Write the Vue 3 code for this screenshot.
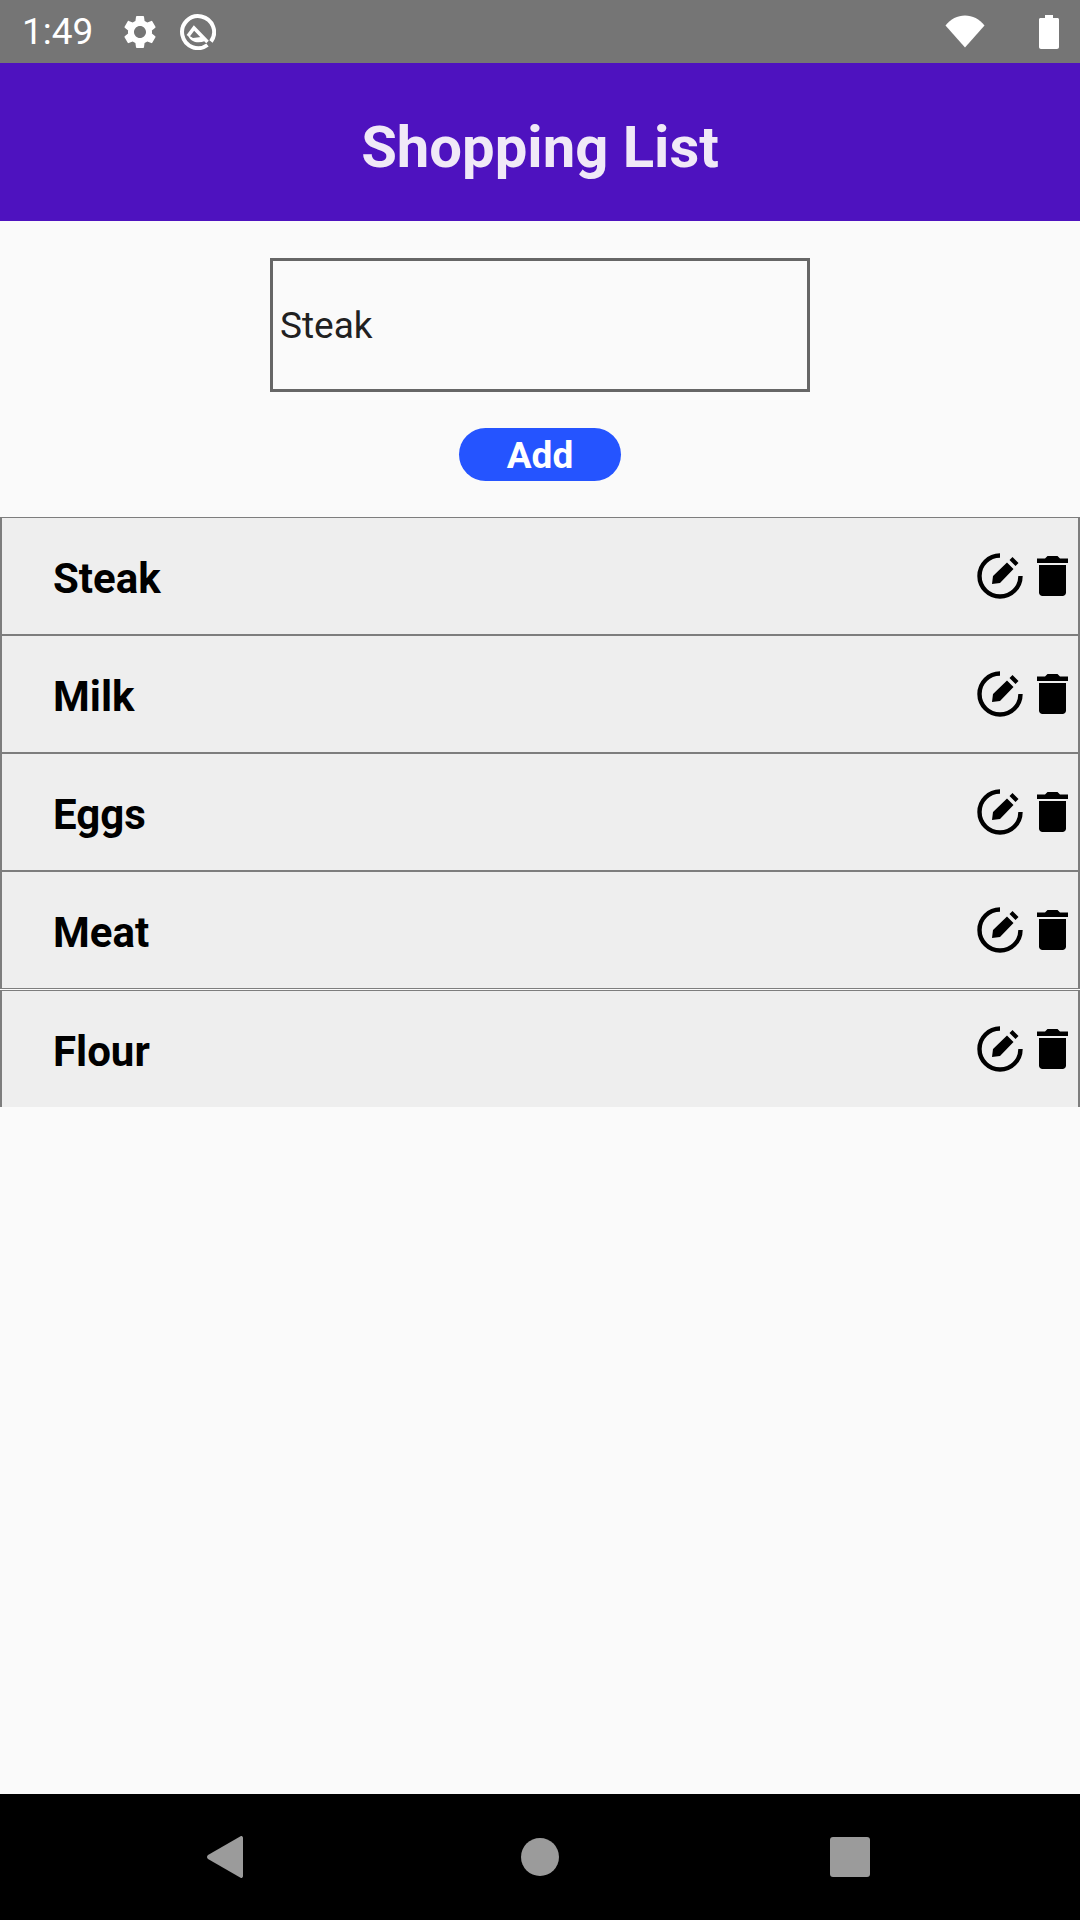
<template>
  <div class="screen">
    <div class="status-bar">
      <span class="time">1:49</span>
      <svg class="gear" viewBox="0 0 24 24"><path fill="#fff" d="M19.14 12.94c.04-.3.06-.61.06-.94 0-.32-.02-.64-.07-.94l2.03-1.58a.49.49 0 0 0 .12-.61l-1.92-3.32a.488.488 0 0 0-.59-.22l-2.39.96c-.5-.38-1.03-.7-1.62-.94l-.36-2.54a.484.484 0 0 0-.48-.41h-3.84c-.24 0-.43.17-.47.41l-.36 2.54c-.59.24-1.13.57-1.62.94l-2.39-.96c-.22-.08-.47 0-.59.22L2.74 8.87c-.12.21-.08.47.12.61l2.03 1.58c-.05.3-.09.63-.09.94s.02.64.07.94l-2.03 1.58a.49.49 0 0 0-.12.61l1.92 3.32c.12.22.37.29.59.22l2.39-.96c.5.38 1.03.7 1.62.94l.36 2.54c.05.24.24.41.48.41h3.84c.24 0 .44-.17.47-.41l.36-2.54c.59-.24 1.13-.56 1.62-.94l2.39.96c.22.08.47 0 .59-.22l1.92-3.32c.12-.22.07-.47-.12-.61l-2.01-1.58zM12 15.6c-1.98 0-3.6-1.62-3.6-3.6s1.62-3.6 3.6-3.6 3.6 1.62 3.6 3.6-1.62 3.6-3.6 3.6z"/></svg>
      <svg class="q-icon" viewBox="0 0 36 36">
        <path fill="none" stroke="#fff" stroke-width="4" d="M27.500 31A16 16 0 1 1 31 27.500"/>
        <path fill="none" stroke="#fff" stroke-width="3.600" d="M8 22 14 14 27.500 28"/>
        <path fill="#fff" d="M8 21 13 24 21 23 25 27C18 30 10 28 8 21z"/>
      </svg>
      <span class="spacer"></span>
      <svg class="wifi" viewBox="0 0 40 33"><path fill="#fff" d="M0.5 10.5C5.5 4 12.5 .5 20 .5s14.5 3.500 19.500 10L20 32.500z"/></svg>
      <svg class="battery" viewBox="0 0 20 34"><path fill="#fff" d="M6 0h8v3h4.500c.8 0 1.500.7 1.500 1.500V32c0 1.100-.9 2-2 2H2c-1.100 0-2-.9-2-2V4.500C0 3.700.7 3 1.500 3H6z"/></svg>
    </div>

    <header class="app-header">Shopping List</header>

    <main class="content">
      <div class="form">
        <input class="item-input" type="text" value="Steak" />
        <button class="add-btn">Add</button>
      </div>

      <div class="list">
        <div v-for="item in items" :key="item" class="row">
          <span class="row-name">{{ item }}</span>
          <svg class="edit-icon" viewBox="0 0 46 46">
            <path fill="none" stroke="#000" stroke-width="4.400" d="M23 2.500A20.500 20.500 0 1 0 43.500 23"/>
            <path fill="#000" d="M15 31 16 23 30 9.500 36.500 16 23 30zM32.500 7 35.500 4 41.500 10 38.500 13z"/>
          </svg>
          <svg class="trash-icon" viewBox="0 0 31 40">
            <path fill="#000" d="M10.500 0h10l2.500 2.500h8v4.500H0V2.500h8zM2 9h27v27.500c0 2-1.600 3.500-3.500 3.500h-20C3.600 40 2 38.500 2 36.500z"/>
          </svg>
        </div>
      </div>
    </main>

    <nav class="nav-bar">
      <svg class="nav-back" viewBox="0 0 36 42"><path fill="#9b9b9b" d="M34 0c1 0 2 .6 2 2v38c0 1.400-1 2-2 2L1 23c-1.300-1-1.300-3 0-4z"/></svg>
      <span class="nav-home"></span>
      <span class="nav-recent"></span>
    </nav>
  </div>
</template>

<script setup>
const items = ['Steak', 'Milk', 'Eggs', 'Meat', 'Flour']
</script>

<style>
html, body {
  margin: 0;
  padding: 0;
}
</style>

<style scoped>
.screen {
  width: 1080px;
  height: 1920px;
  display: flex;
  flex-direction: column;
  background: #fafafa;
  font-family: Roboto, "Liberation Sans", sans-serif;
  overflow: hidden;
}

.status-bar {
  height: 63px;
  flex: none;
  display: flex;
  align-items: center;
  padding: 0 21px 0 22px;
  box-sizing: border-box;
  background: #757575;
  color: #fff;
}

.time {
  font-size: 37px;
  width: 98px;
}

.gear {
  width: 40px;
  height: 40px;
}

.q-icon {
  width: 36px;
  height: 36px;
  margin-left: 20px;
}

.spacer {
  flex: 1;
}

.wifi {
  width: 40px;
  height: 33px;
}

.battery {
  width: 20px;
  height: 34px;
  margin-left: 54px;
}

.app-header {
  height: 158px;
  flex: none;
  display: flex;
  align-items: center;
  justify-content: center;
  background: #4e12bf;
  color: #f0e9f7;
  font-size: 58px;
  font-weight: 700;
  padding-top: 10px;
  box-sizing: border-box;
}

.content {
  flex: 1;
}

.form {
  display: flex;
  flex-direction: column;
  align-items: center;
  padding-top: 37px;
}

.item-input {
  width: 540px;
  height: 134px;
  box-sizing: border-box;
  border: 3px solid #666;
  border-radius: 0;
  padding: 0 7px;
  background: transparent;
  font-family: inherit;
  font-size: 37px;
  color: #212121;
  outline: none;
}

.add-btn {
  width: 162px;
  height: 53px;
  margin-top: 36px;
  padding: 1px 0 0;
  border: none;
  border-radius: 27px;
  background: #2554ff;
  color: #fff;
  font-family: inherit;
  font-size: 37px;
  font-weight: 700;
}

.list {
  margin-top: 36px;
  height: 590px;
  overflow: hidden;
}

.row {
  height: 118px;
  box-sizing: border-box;
  display: flex;
  align-items: center;
  border: 1px solid #7d7d7d;
  border-left-width: 2px;
  border-right-width: 2px;
  background: #eee;
  padding-left: 51px;
}

.row:nth-child(5) {
  margin-top: 1px;
}

.row-name {
  flex: 1;
  font-size: 42px;
  font-weight: 700;
  color: #000;
  padding-top: 5px;
}

.edit-icon {
  width: 46px;
  height: 46px;
  margin-bottom: 1px;
}

.trash-icon {
  width: 31px;
  height: 40px;
  margin-left: 14px;
  margin-right: 10px;
}

.nav-bar {
  height: 126px;
  flex: none;
  background: #000;
  position: relative;
}

.nav-back {
  position: absolute;
  left: 207px;
  top: 42px;
  width: 36px;
  height: 42px;
}

.nav-home {
  position: absolute;
  left: 521px;
  top: 44px;
  width: 38px;
  height: 38px;
  border-radius: 50%;
  background: #9b9b9b;
}

.nav-recent {
  position: absolute;
  left: 830px;
  top: 43px;
  width: 40px;
  height: 40px;
  border-radius: 3px;
  background: #9b9b9b;
}
</style>
